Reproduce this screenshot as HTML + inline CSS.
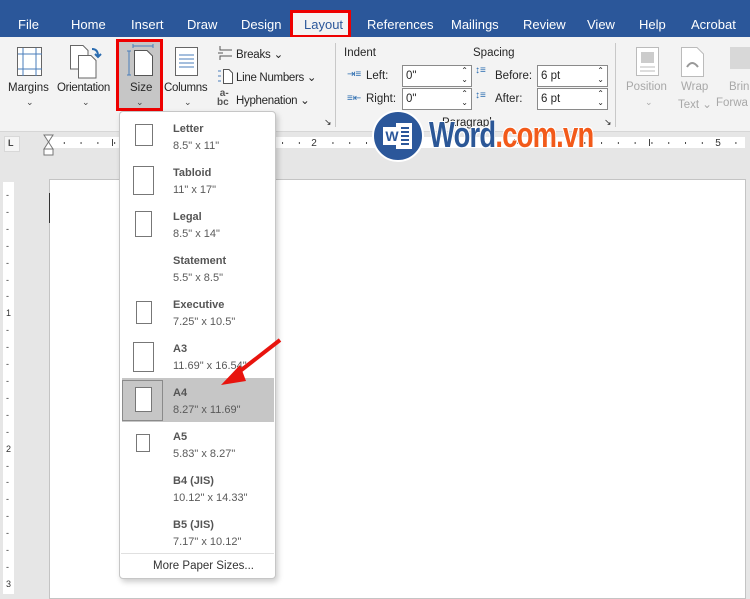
<!DOCTYPE html>
<html><head><meta charset="utf-8"><style>
*{margin:0;padding:0;box-sizing:border-box}
body{width:750px;height:594px;overflow:hidden;position:relative;background:#e6e6e6;font-family:"Liberation Sans",sans-serif;font-size:12px;color:#262626}
.a{position:absolute;white-space:nowrap}
.tab{position:absolute;top:17px;color:#fff;font-size:13px}
.lbl{font-size:11.5px;color:#262626}
.chev{font-size:9px;color:#444}
.box{position:absolute;background:#fff;border:1px solid #8a8a8a;height:22px;font-size:11.5px;padding:4px 0 0 3px}
.it{position:absolute;left:0;width:155px;height:44px}
.it b{position:absolute;left:53px;top:9px;font-size:11px;color:#555}
.it span{position:absolute;left:53px;top:26px;font-size:11px;color:#5a5a5a}
.pg{position:absolute;border:1px solid #777;background:#fff}
</style></head><body>
<div class="a" style="left:0;top:0;width:750px;height:37px;background:#2b579a"></div>
<div class="tab" style="left:18px">File</div>
<div class="tab" style="left:71px">Home</div>
<div class="tab" style="left:131px">Insert</div>
<div class="tab" style="left:187px">Draw</div>
<div class="tab" style="left:241px">Design</div>
<div class="a" style="left:290px;top:10px;width:61px;height:28px;background:#f3f3f3;border:3px solid #e00"></div>
<div class="tab" style="left:304px;color:#2b579a">Layout</div>
<div class="tab" style="left:367px">References</div>
<div class="tab" style="left:451px">Mailings</div>
<div class="tab" style="left:523px">Review</div>
<div class="tab" style="left:587px">View</div>
<div class="tab" style="left:639px">Help</div>
<div class="tab" style="left:691px">Acrobat</div>
<div class="a" style="left:0;top:37px;width:750px;height:95px;background:#f3f3f3;border-bottom:1px solid #d6d6d6"></div>
<svg class="a" style="left:17px;top:47px" width="26" height="30"><rect x="0.5" y="0.5" width="24" height="28" fill="#fff" stroke="#666"/><path d="M6 1V29M19 1V29M1 7H25M1 22H25" stroke="#4a7ebb" fill="none"/></svg>
<div class="a lbl" style="left:8px;top:82px">Margins</div><div class="a chev" style="left:26px;top:97px">⌄</div>
<svg class="a" style="left:70px;top:45px" width="32" height="34"><path d="M0.5 0.5H13L18 5.5V24H0.5Z" fill="#fff" stroke="#666"/><path d="M8.5 10.5H21L26 15.5V33H8.5Z" fill="#fff" stroke="#666"/><path d="M22 4Q28 4 28 11M25 9L28 12L31 9" stroke="#2b6cb0" stroke-width="2" fill="none"/></svg>
<div class="a lbl" style="left:57px;top:82px;letter-spacing:-0.3px">Orientation</div><div class="a chev" style="left:82px;top:97px">⌄</div>
<div class="a" style="left:116px;top:39px;width:47px;height:72px;background:#c6c6c6;border:3px solid #e00"></div>
<svg class="a" style="left:126px;top:44px" width="30" height="32"><path d="M7 2H27M7 0V4M27 0V4M3 7V31M1 7H5M1 31H5" stroke="#4a7ebb" fill="none"/><path d="M8.5 6.5H21L26.5 12V31.5H8.5Z" fill="#fff" stroke="#555"/></svg>
<div class="a lbl" style="left:130px;top:82px">Size</div><div class="a chev" style="left:136px;top:97px">⌄</div>
<svg class="a" style="left:175px;top:47px" width="24" height="30"><rect x="0.5" y="0.5" width="22" height="28" fill="#fff" stroke="#666"/><path d="M4 8H19M4 12H19M4 16H19M4 20H19" stroke="#4a7ebb" fill="none"/></svg>
<div class="a lbl" style="left:164px;top:82px;letter-spacing:-0.3px">Columns</div><div class="a chev" style="left:184px;top:97px">⌄</div>
<svg class="a" style="left:217px;top:45px" width="16" height="16"><path d="M3 1V5H15M3 15V11H15M1 8H6" stroke="#555" fill="none"/></svg>
<div class="a lbl" style="left:236px;top:47px;letter-spacing:-0.2px">Breaks ⌄</div>
<svg class="a" style="left:217px;top:68px" width="16" height="16"><path d="M6.5 1.5H12L15.5 5V15.5H6.5Z" fill="#fff" stroke="#555"/><path d="M1 3H4M1 8H4M1 13H4" stroke="#4a7ebb"/></svg>
<div class="a lbl" style="left:236px;top:70px;letter-spacing:-0.3px">Line Numbers ⌄</div>
<div class="a" style="left:217px;top:89px;font-size:10px;color:#555;font-weight:bold;line-height:9px">&nbsp;a-<br>bc</div>
<div class="a lbl" style="left:236px;top:93px;letter-spacing:-0.3px">Hyphenation ⌄</div>
<div class="a" style="left:324px;top:117px;font-size:9px">↘</div>
<div class="a" style="left:335px;top:43px;width:1px;height:84px;background:#c8c8c8"></div>
<div class="a lbl" style="left:344px;top:47px">Indent</div>
<div class="a lbl" style="left:473px;top:47px">Spacing</div>
<div class="a" style="left:347px;top:69px;font-size:10px;color:#2b6cb0">⇥≡</div>
<div class="a lbl" style="left:366px;top:70px">Left:</div>
<div class="box" style="left:402px;top:65px;width:70px">0"<span style="position:absolute;right:3px;top:0;font-size:8px;line-height:9px">⌃<br>⌄</span></div>
<div class="a" style="left:347px;top:93px;font-size:10px;color:#2b6cb0">≡⇤</div>
<div class="a lbl" style="left:366px;top:93px">Right:</div>
<div class="box" style="left:402px;top:88px;width:70px">0"<span style="position:absolute;right:3px;top:0;font-size:8px;line-height:9px">⌃<br>⌄</span></div>
<div class="a" style="left:475px;top:66px;font-size:10px;color:#2b6cb0;line-height:10px">↕≡</div>
<div class="a lbl" style="left:495px;top:70px">Before:</div>
<div class="box" style="left:537px;top:65px;width:71px">6 pt<span style="position:absolute;right:3px;top:0;font-size:8px;line-height:9px">⌃<br>⌄</span></div>
<div class="a" style="left:475px;top:90px;font-size:10px;color:#2b6cb0">↕≡</div>
<div class="a lbl" style="left:495px;top:93px">After:</div>
<div class="box" style="left:537px;top:88px;width:71px">6 pt<span style="position:absolute;right:3px;top:0;font-size:8px;line-height:9px">⌃<br>⌄</span></div>
<div class="a lbl" style="left:442px;top:117px">Paragraph</div>
<div class="a" style="left:604px;top:117px;font-size:9px">↘</div>
<div class="a" style="left:615px;top:43px;width:1px;height:84px;background:#c8c8c8"></div>
<svg class="a" style="left:636px;top:47px" width="24" height="30"><rect x="0.5" y="0.5" width="22" height="28" fill="#fff" stroke="#bbb"/><rect x="5" y="5" width="13" height="11" fill="#ccc"/><path d="M4 20H19M4 24H19" stroke="#bbb"/></svg>
<div class="a lbl" style="left:626px;top:81px;color:#a8a8a8">Position</div><div class="a chev" style="left:645px;top:97px;color:#aaa">⌄</div>
<svg class="a" style="left:681px;top:47px" width="24" height="30"><path d="M0.5 0.5H16L22.5 7V29.5H0.5Z" fill="#fff" stroke="#bbb"/><path d="M6 20Q11 12 17 20" stroke="#999" stroke-width="2" fill="none"/></svg>
<div class="a lbl" style="left:681px;top:81px;color:#a8a8a8">Wrap</div>
<div class="a lbl" style="left:678px;top:97px;color:#a8a8a8">Text ⌄</div>
<div class="a" style="left:730px;top:47px;width:20px;height:22px;background:#d8d8d8"></div>
<div class="a lbl" style="left:729px;top:81px;color:#a8a8a8">Brin</div>
<div class="a lbl" style="left:716px;top:97px;color:#a8a8a8">Forwa</div>
<!-- ruler -->
<div class="a" style="left:4px;top:136px;width:16px;height:16px;background:#f5f5f5;border:1px solid #d8d8d8"></div>
<div class="a" style="left:8px;top:138px;font-size:9px;font-weight:bold;color:#444">L</div>
<svg class="a" style="left:50px;top:137px" width="695" height="11">
<defs><pattern id="tk" patternUnits="userSpaceOnUse" x="-3" width="16.79" height="11"><rect x="0" y="5" width="1" height="2" fill="#444"/></pattern></defs>
<rect width="695" height="11" fill="#fff"/><rect x="8" width="687" height="11" fill="url(#tk)"/>
<path d="M62.5 2V9M196.5 2V9M330.5 2V9M464.5 2V9M599.5 2V9" stroke="#444"/>
<rect x="258" y="0" width="12" height="11" fill="#fff"/><text x="264" y="9" font-size="10" text-anchor="middle" fill="#333" font-family="Liberation Sans">2</text>
<rect x="662" y="0" width="12" height="11" fill="#fff"/><text x="668" y="9" font-size="10" text-anchor="middle" fill="#333" font-family="Liberation Sans">5</text>
</svg>
<svg class="a" style="left:43px;top:134px" width="12" height="22"><path d="M1 1H10L5.5 8ZM5.5 8L1 15H10Z" fill="#fff" stroke="#777"/><rect x="1" y="15" width="9" height="6" fill="#fff" stroke="#777"/></svg>
<div class="a" style="left:3px;top:182px;width:11px;height:412px;background:#fff"></div>
<div class="a" style="left:6px;top:187px;font-size:9px;line-height:16.9px;color:#333">-<br>-<br>-<br>-<br>-<br>-<br>-<br>1<br>-<br>-<br>-<br>-<br>-<br>-<br>-<br>2<br>-<br>-<br>-<br>-<br>-<br>-<br>-<br>3</div>
<div class="a" style="left:49px;top:179px;width:697px;height:420px;background:#fff;border:1px solid #c4c4c4"></div>
<div class="a" style="left:49px;top:193px;width:1px;height:30px;background:#333"></div>
<!-- logo -->
<svg class="a" style="left:372px;top:110px" width="52" height="52"><circle cx="26" cy="26" r="25" fill="#2b579a" stroke="#fff" stroke-width="2"/><rect x="24" y="13" width="16" height="26" fill="#fff"/><path d="M27 18H37M27 22H37M27 26H37M27 30H37M27 34H37" stroke="#2b579a" stroke-width="2"/><rect x="11" y="17" width="18" height="18" fill="#fff"/><text x="20" y="31" font-family="Liberation Sans" font-weight="bold" font-size="14" fill="#2b579a" text-anchor="middle">W</text></svg>
<div class="a" style="left:429px;top:114px;font-size:36px;font-weight:bold;letter-spacing:-1px;transform:scaleX(0.76);transform-origin:left;text-shadow:1px 1px 0 #fff,-1px -1px 0 #fff,1px -1px 0 #fff,-1px 1px 0 #fff"><span style="color:#2b5797">Word</span><span style="color:#f25a1a">.com.vn</span></div>
<!-- dropdown -->
<div class="a" style="left:119px;top:111px;width:157px;height:468px;background:#fff;border:1px solid #c6c6c6;border-radius:4px;box-shadow:2px 3px 6px rgba(0,0,0,.2)">
 <div class="it" style="top:2px"><div class="pg" style="left:15px;top:10px;width:18px;height:22px"></div><b>Letter</b><span>8.5" x 11"</span></div>
 <div class="it" style="top:46px"><div class="pg" style="left:13px;top:8px;width:21px;height:29px"></div><b>Tabloid</b><span>11" x 17"</span></div>
 <div class="it" style="top:90px"><div class="pg" style="left:15px;top:9px;width:17px;height:26px"></div><b>Legal</b><span>8.5" x 14"</span></div>
 <div class="it" style="top:134px"><b>Statement</b><span>5.5" x 8.5"</span></div>
 <div class="it" style="top:178px"><div class="pg" style="left:16px;top:11px;width:16px;height:23px"></div><b>Executive</b><span>7.25" x 10.5"</span></div>
 <div class="it" style="top:222px"><div class="pg" style="left:13px;top:8px;width:21px;height:30px"></div><b>A3</b><span>11.69" x 16.54"</span></div>
 <div class="it" style="top:266px;background:#c6c6c6;left:2px;width:152px"><div class="a" style="left:0;top:2px;width:41px;height:41px;border:1px solid #8a8a8a"></div><div class="pg" style="left:13px;top:9px;width:17px;height:25px"></div><b style="left:51px">A4</b><span style="left:51px">8.27" x 11.69"</span></div>
 <div class="it" style="top:310px"><div class="pg" style="left:16px;top:12px;width:14px;height:18px"></div><b>A5</b><span>5.83" x 8.27"</span></div>
 <div class="it" style="top:354px"><b>B4 (JIS)</b><span>10.12" x 14.33"</span></div>
 <div class="it" style="top:398px"><b>B5 (JIS)</b><span>7.17" x 10.12"</span></div>
 <div class="a" style="left:1px;top:441px;width:153px;height:1px;background:#e0e0e0"></div>
 <div class="a" style="left:33px;top:448px;font-size:11.5px;color:#333">More Paper Sizes...</div>
</div>
<svg class="a" style="left:215px;top:335px;z-index:5" width="70" height="55"><path d="M65 5L20 40" stroke="#e8140e" stroke-width="4"/><path d="M6 50L25 30L31 46Z" fill="#e8140e"/></svg>
</body></html>
